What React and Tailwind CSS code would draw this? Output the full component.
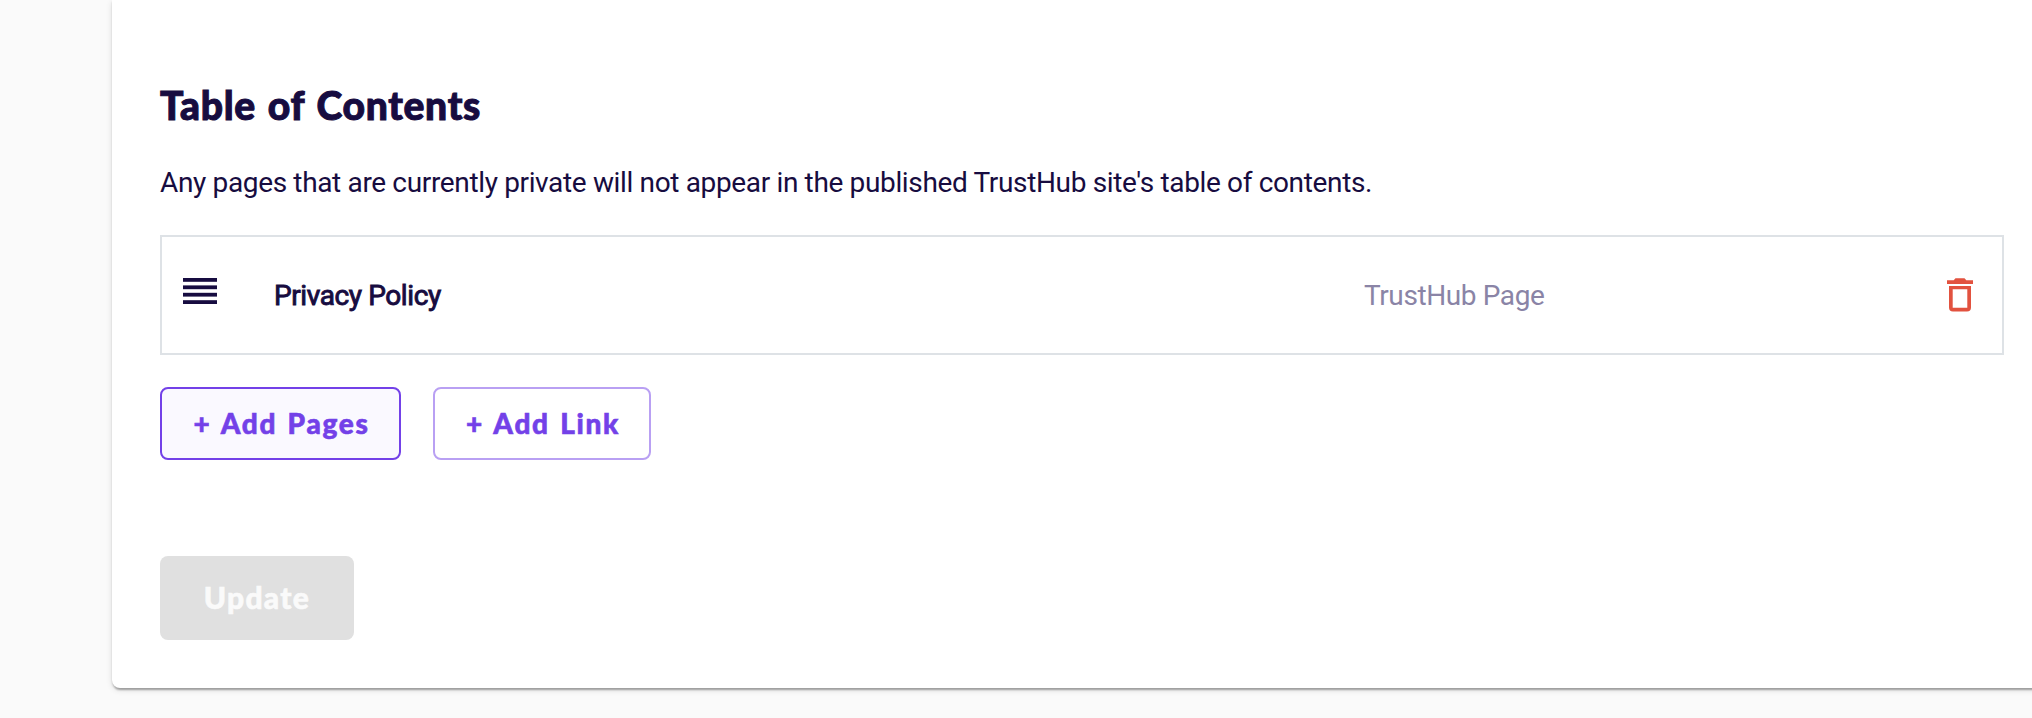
import React from "react";

const pages = [{ id: "01", title: "Privacy Policy", type: "TrustHub Page" }];

const DragIcon = () => (
  <svg width="34" height="26" viewBox="0 0 34 26" fill="#170c40">
    <rect y="0" width="34" height="3.8" />
    <rect y="7.4" width="34" height="3.8" />
    <rect y="14.8" width="34" height="3.8" />
    <rect y="22.2" width="34" height="3.8" />
  </svg>
);

const TrashIcon = () => (
  <svg width="26" height="34" viewBox="0 0 26 34" fill="#e2523f">
    <path d="M8.5 0.3h9l1.8 1.9H26V6H0V2.2h6.7z" />
    <path
      fillRule="evenodd"
      d="M2 8h22v21.6a4 4 0 0 1-4 4H6a4 4 0 0 1-4-4zM5.7 11.3v18.4h14.6V11.3z"
    />
  </svg>
);

const App = () => {
  return (
    <div className="w-full h-[718px] bg-[#fafafa] pl-28 overflow-hidden font-['Roboto',sans-serif] text-[#170c40]">
      <div className="h-[688px] -mr-8 bg-white rounded-bl-[8px] pl-12 pr-[60px] shadow-[0_4px_2px_-2px_rgba(0,0,0,0.2),0_2px_2px_0_rgba(0,0,0,0.14),0_2px_6px_0_rgba(0,0,0,0.12)]">
        <h2 className="pt-[80px] text-[39px] leading-[50px] font-black tracking-[0.7px] [word-spacing:2px] [-webkit-text-stroke:1px_#170c40] font-['Lato',sans-serif] whitespace-nowrap">
          Table of Contents
        </h2>
        <p className="mt-8 text-[28px] leading-[42px] tracking-[-0.35px] whitespace-nowrap">
          Any pages that are currently private will not appear in the published
          TrustHub site's table of contents.
        </p>

        {/* Page list */}
        <div className="mt-[31px]">
          {pages.map((page) => (
            <div
              key={page.id}
              className="h-[120px] border-2 border-[#dee2e6] pl-[21px] pr-[29px] flex items-center text-[28px] leading-[42px] tracking-[-0.4px]"
            >
              <span className="w-[91px] pb-2">
                <DragIcon />
              </span>
              <span className="w-[1090px] pt-0.5 [-webkit-text-stroke:0.9px_#170c40]">
                {page.title}
              </span>
              <span className="pt-0.5 text-[#8a84a6]">{page.type}</span>
              <button type="button" aria-label="Delete" className="ml-auto">
                <TrashIcon />
              </button>
            </div>
          ))}
        </div>

        <div className="mt-8 flex gap-8 font-['Lato',sans-serif] font-black text-[28px] text-[#7341e8] [-webkit-text-stroke:0.6px_#7341e8]">
          <button
            type="button"
            className="w-[241px] h-[73px] pb-0.5 pl-0.5 border-2 border-[#7341e8] bg-[#faf9ff] rounded-[8px] tracking-[1.7px] [word-spacing:2px] whitespace-nowrap"
          >
            + Add Pages
          </button>
          <button
            type="button"
            className="w-[218px] h-[73px] pb-0.5 pl-0.5 border-2 border-[#b9a0f3] rounded-[8px] tracking-[1.7px] [word-spacing:2px] whitespace-nowrap"
          >
            + Add Link
          </button>
        </div>

        <button
          type="button"
          disabled
          className="mt-24 w-[194px] h-[84px] pb-0.5 rounded-[8px] bg-[#e0e0e0] text-[#fafafa] font-['Lato',sans-serif] font-black text-[30px] tracking-[1.3px] [-webkit-text-stroke:0.6px_#fafafa]"
        >
          Update
        </button>
      </div>
    </div>
  );
};

export default App;
